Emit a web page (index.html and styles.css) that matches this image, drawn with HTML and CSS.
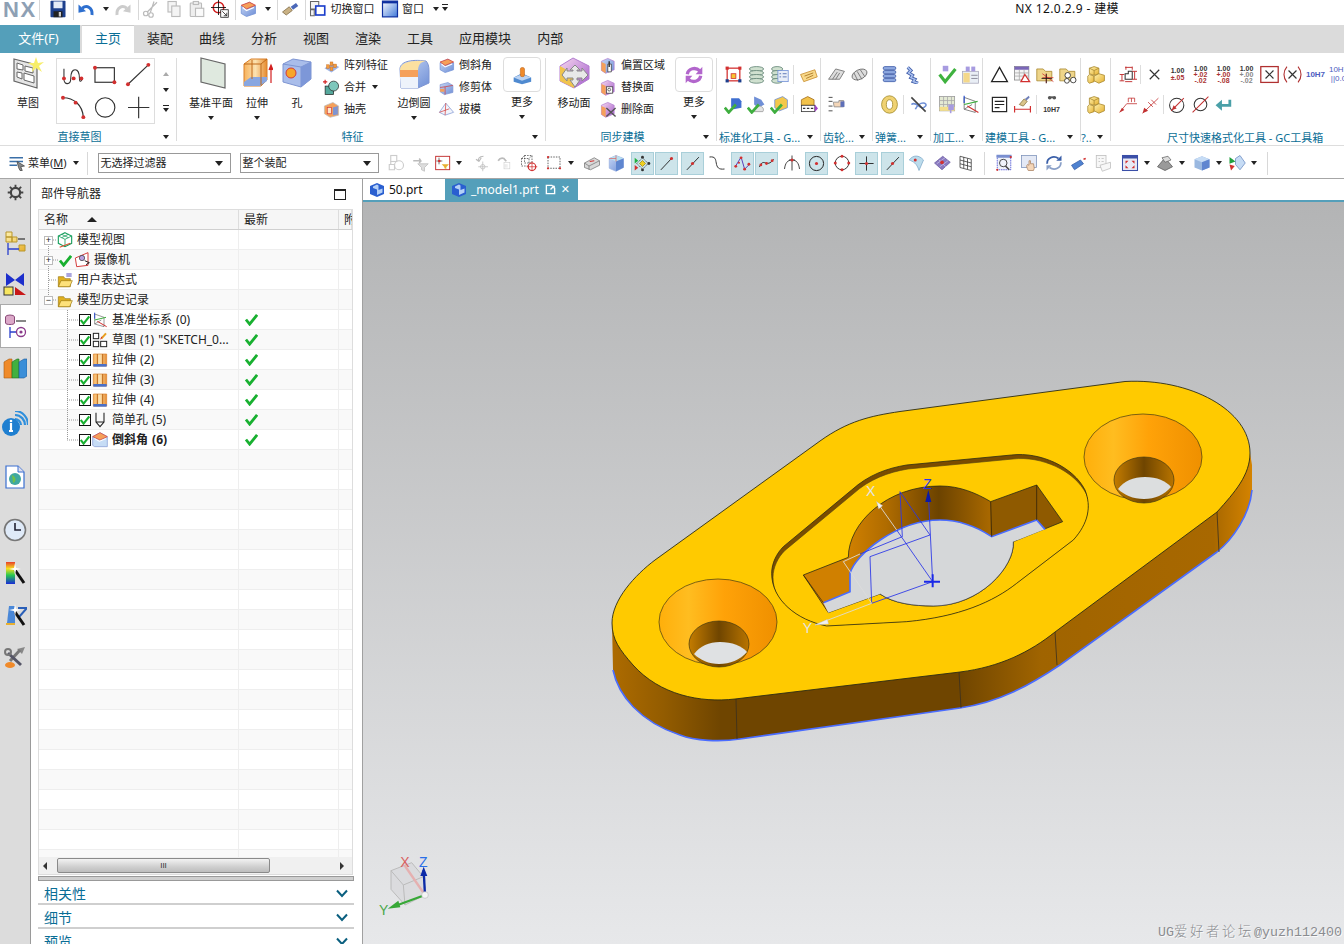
FILE: index.html
```html
<!DOCTYPE html>
<html lang="zh-CN">
<head>
<meta charset="utf-8">
<title>NX 12.0.2.9 - 建模</title>
<link rel="stylesheet" href="styles.css">
</head>
<body>
<svg class="sprite" xmlns="http://www.w3.org/2000/svg">
<defs>
<linearGradient id="go" x1="0" x2="1" y1="0" y2="0"><stop offset="0" stop-color="#f7b25c"/><stop offset=".5" stop-color="#fbe2b0"/><stop offset="1" stop-color="#e68a2e"/></linearGradient>
<linearGradient id="gb" x1="0" x2="1" y1="0" y2="1"><stop offset="0" stop-color="#c6d6f5"/><stop offset="1" stop-color="#6f8fd6"/></linearGradient>
<linearGradient id="gy" x1="0" x2="1" y1="0" y2="1"><stop offset="0" stop-color="#fff2b0"/><stop offset="1" stop-color="#e6b02e"/></linearGradient>
<linearGradient id="gw" x1="0" x2="1" y1="0" y2="1"><stop offset="0" stop-color="#fff"/><stop offset="1" stop-color="#3f78d8"/></linearGradient>
<linearGradient id="gr" x1="0" x2="0" y1="0" y2="1"><stop offset="0" stop-color="#e8402a"/><stop offset=".3" stop-color="#f6e020"/><stop offset=".6" stop-color="#28c850"/><stop offset="1" stop-color="#1a2ad8"/></linearGradient>
<linearGradient id="gp" x1="0" x2="1" y1="0" y2="1"><stop offset="0" stop-color="#f6d9ee"/><stop offset="1" stop-color="#a35ccc"/></linearGradient>
</defs>
<symbol id="save" viewBox="0 0 24 24"><rect x="2" y="1" width="20" height="22" rx="1" fill="#1d3f8c"/><rect x="6" y="2" width="12" height="9" fill="#e4ebf7"/><rect x="6" y="15" width="12" height="8" fill="#222"/><rect x="13" y="16" width="3" height="6" fill="#ccc"/></symbol>
<symbol id="undo" viewBox="0 0 24 24"><path d="M20 20C21 10 13 6 7 11" fill="none" stroke="#2d6fcf" stroke-width="4"/><path d="M2 6L12 15L2 17Z" fill="#2d6fcf"/></symbol>
<symbol id="redo" viewBox="0 0 24 24"><path d="M4 20C3 10 11 6 17 11" fill="none" stroke="#ccc" stroke-width="4"/><path d="M22 6L12 15L22 17Z" fill="#ccc"/></symbol>
<symbol id="cut" viewBox="0 0 24 24"><g fill="none" stroke="#bbb" stroke-width="1.6"><circle cx="5" cy="18" r="3"/><circle cx="12" cy="20" r="3"/><path d="M7 16L20 3M11 17L16 2"/></g></symbol>
<symbol id="copy" viewBox="0 0 24 24"><g fill="#f4f4f4" stroke="#bbb" stroke-width="1.5"><rect x="4" y="2" width="11" height="14"/><rect x="9" y="8" width="11" height="14"/></g></symbol>
<symbol id="paste" viewBox="0 0 24 24"><g fill="#eee" stroke="#bbb" stroke-width="1.5"><rect x="3" y="4" width="15" height="18" rx="1"/><rect x="7" y="2" width="7" height="4"/><rect x="10" y="11" width="11" height="11" fill="#fafafa"/></g></symbol>
<symbol id="xhair" viewBox="0 0 24 24"><circle cx="10" cy="10" r="7" fill="#fff" stroke="#d42020" stroke-width="2"/><path d="M10 0V20M0 10H20" stroke="#111" stroke-width="1.2"/><rect x="13" y="13" width="10" height="10" fill="#fff" stroke="#111"/><path d="M15 15L21 21M21 17V21H17" stroke="#111" fill="none"/></symbol>
<symbol id="chamf" viewBox="0 0 24 24"><path d="M3 8L14 3L22 8V18L10 22L3 18Z" fill="url(#gb)" stroke="#6f8fd6"/><path d="M3 7L14 3L22 7L10 12Z" fill="#f5a05a" stroke="#d23a3a"/><path d="M5 10L10 14L20 10" fill="none" stroke="#fff" stroke-width="1.5"/></symbol>
<symbol id="brush" viewBox="0 0 24 24"><path d="M2 16L11 9L15 14L7 20Z" fill="#c9b184" stroke="#7a6540"/><path d="M13 9L20 4L23 8L16 13Z" fill="#4b68b8"/></symbol>
<symbol id="switch" viewBox="0 0 24 24"><path d="M2 2H13V12H2ZM2 13H7V21H2Z" fill="#f3f3f3" stroke="#666" stroke-width="1.4"/><rect x="9" y="8" width="12" height="12" fill="#fff" stroke="#1d3fcc" stroke-width="2.2"/></symbol>
<symbol id="window" viewBox="0 0 24 24"><rect x="2" y="1.5" width="20" height="21" fill="url(#gw)" stroke="#0d2fa0" stroke-width="1.6"/><rect x="2" y="1.5" width="20" height="3" fill="#0d2fa0"/></symbol>
<symbol id="menu" viewBox="0 0 24 24"><path d="M2 5H20M2 10H20M2 15H12" stroke="#3a6fa8" stroke-width="2"/><path d="M12 10L22 16L17 17L19 22L16 22L14 18Z" fill="#888" stroke="#444"/></symbol>
<symbol id="sketch" viewBox="0 0 32 32"><path d="M2 2L25 8V31L2 24Z" fill="#e5e5e5" stroke="#666" stroke-width="1.2"/><g fill="#fff" stroke="#666"><path d="M5 6L11 8V13L5 12Z"/><path d="M13 9L21 11V16L13 14Z"/><path d="M5 15L10 16V22L5 20Z"/><path d="M12 16L22 19V26L12 23Z"/></g><path d="M24 0L26 6L32 5L27 9L30 15L24 11L20 15L21 9L16 6L22 6Z" fill="#f7ee6a"/></symbol>
<symbol id="g1" viewBox="0 0 33 33"><path d="M7 10V21C7 27 14 27 14 20C14 8 23 8 23 20C23 24 25 24 26 20" fill="none" stroke="#333" stroke-width="1.1"/><g fill="#d23030"><circle cx="7" cy="20" r="2"/><circle cx="17" cy="20" r="2"/><circle cx="25" cy="20" r="2"/></g></symbol>
<symbol id="g2" viewBox="0 0 33 33"><rect x="6" y="9" width="20" height="15" fill="none" stroke="#333" stroke-width="1.2"/><circle cx="6" cy="9" r="2" fill="#d23030"/><circle cx="26" cy="24" r="2" fill="#d23030"/></symbol>
<symbol id="g3" viewBox="0 0 33 33"><path d="M6 26L27 6" stroke="#333" stroke-width="1.2"/><circle cx="6" cy="26" r="2" fill="#d23030"/><circle cx="27" cy="6" r="2" fill="#d23030"/></symbol>
<symbol id="g4" viewBox="0 0 33 33"><path d="M6 7C17 7 26 14 27 27" fill="none" stroke="#333" stroke-width="1.2"/><g fill="#d23030"><circle cx="6" cy="7" r="2"/><circle cx="19" cy="12" r="2"/><circle cx="27" cy="27" r="2"/></g></symbol>
<symbol id="g5" viewBox="0 0 33 33"><circle cx="16.500" cy="17" r="10" fill="none" stroke="#333" stroke-width="1.2"/></symbol>
<symbol id="g6" viewBox="0 0 33 33"><path d="M17 6V28M6 17H28" stroke="#333" stroke-width="1.2"/></symbol>
<symbol id="plane" viewBox="0 0 32 32"><path d="M6 1L30 7V31L6 25Z" fill="#dfe9df" stroke="#666" stroke-width="1.2"/></symbol>
<symbol id="extrude" viewBox="0 0 32 32"><path d="M3 7L10 2H26V23L20 29H3Z" fill="url(#go)" stroke="#d9802b"/><path d="M3 25L10 20H26V24L19 29H3Z" fill="#88a6e0"/><path d="M11 3V22M20 7V28M3 7H20L26 2" stroke="#c06a1a" fill="none"/><path d="M30 10V26M28 13L30 8L32 13" stroke="#d22020" fill="#d22020" stroke-width="1.2"/></symbol>
<symbol id="hole" viewBox="0 0 32 32"><path d="M2 7L12 2L30 5V22L20 30L2 25Z" fill="#a9bdea" stroke="#7e95d2"/><path d="M2 7L20 10V30M20 10L30 5" fill="none" stroke="#7e95d2"/><path d="M20 10V30L30 22V5Z" fill="#7d97d8"/><circle cx="10" cy="16" r="5" fill="#f7a629" stroke="#d23a3a"/></symbol>
<symbol id="pattern" viewBox="0 0 24 24"><path d="M2 16L12 22L23 14L13 9Z" fill="#9eb5e6"/><g fill="#f59b3a" stroke="#c0661a" stroke-width=".6"><rect x="5" y="11" width="4" height="5"/><rect x="10" y="14" width="4" height="5"/><rect x="10" y="7" width="4" height="5"/><rect x="15" y="10" width="4" height="5"/></g></symbol>
<symbol id="unite" viewBox="0 0 24 24"><rect x="3" y="10" width="12" height="12" fill="#55a89c" stroke="#222"/><circle cx="15" cy="10" r="7" fill="#7ec7bc" stroke="#222"/><path d="M0 4H6M3 1V7" stroke="#d22020" stroke-width="1.6"/></symbol>
<symbol id="shell" viewBox="0 0 24 24"><path d="M2 7L14 2L22 7V20L10 23L2 18Z" fill="#f5a05a" stroke="#bbb"/><path d="M14 9L21 7V19L14 20Z" fill="#7e95d2"/><rect x="6" y="9" width="6" height="9" fill="#fbe7c9" stroke="#d23a3a"/></symbol>
<symbol id="blend" viewBox="0 0 32 32"><path d="M2 12C2 5 12 2 28 4C30 6 31 9 31 14V26L20 31H3Z" fill="url(#gb)" stroke="#7e95d2"/><path d="M2 13C2 6 12 3 28 4C22 5 20 8 20 15Z" fill="#fbe0a0"/><path d="M2 13H20V20H2Z" fill="#f5a05a"/><path d="M2 20H20V31H3Z" fill="#eef3fb"/></symbol>
<symbol id="trim" viewBox="0 0 24 24"><path d="M3 8L14 5L21 9V19L9 22L3 18Z" fill="url(#gb)" stroke="#7e95d2"/><path d="M3 12L10 11V22M10 11L21 9" stroke="#d23a3a" fill="none"/><path d="M3 14H9V18H3Z" fill="#f5a05a"/></symbol>
<symbol id="draft" viewBox="0 0 24 24"><path d="M11 3L22 16L10 20L2 16Z" fill="#f1f4fb" stroke="#7e95d2"/><path d="M11 3L10 20M2 16L16 11" stroke="#d23a3a" fill="none"/></symbol>
<symbol id="stamp" viewBox="0 0 24 24"><path d="M2 15L12 10L23 15V20L12 23L2 20Z" fill="#4f8ad0"/><path d="M2 15L12 19L23 15L12 11Z" fill="#bcd3f2"/><rect x="10" y="3" width="5" height="11" rx="2" fill="#f08a2a" stroke="#b75c10" stroke-width=".6"/></symbol>
<symbol id="move" viewBox="0 0 32 32"><path d="M15 1L31 9V22L16 31L2 24V9Z" fill="url(#gp)" stroke="#b27cd0"/><path d="M2 9L16 17V31L2 24Z" fill="#f0c44c"/><path d="M17 8L22 13H19V14H24V11L30 18L24 24V21H19V23H22L17 30L12 23H15V21H9V24L4 18L9 11V14H15V13H12Z" fill="#e8e8e8" stroke="#888"/></symbol>
<symbol id="offset" viewBox="0 0 24 24"><path d="M2 6L11 2L20 6V18L8 23L2 19Z" fill="url(#gb)" stroke="#b27cd0"/><path d="M2 7L8 10V23L2 19Z" fill="#f5a05a"/><path d="M11 10H16V21H11Z" fill="#fff" stroke="#333"/><path d="M13 6V14" stroke="#333" stroke-width="2"/></symbol>
<symbol id="replace" viewBox="0 0 24 24"><path d="M2 6L11 2L20 6V18L8 23L2 19Z" fill="url(#gp)" stroke="#b27cd0"/><path d="M2 7L8 10V23L2 19Z" fill="#f5a05a"/><rect x="9" y="11" width="9" height="9" fill="#fff" stroke="#333"/><circle cx="13" cy="15" r="2" fill="none" stroke="#333"/></symbol>
<symbol id="delete" viewBox="0 0 24 24"><path d="M2 6L11 2L20 6V18L8 23L2 19Z" fill="url(#gp)" stroke="#b27cd0"/><path d="M2 7L8 10V23L2 19Z" fill="#f5a05a"/><path d="M9 10L22 22M22 10L9 22" stroke="#555" stroke-width="2"/></symbol>
<symbol id="sync" viewBox="0 0 24 24"><path d="M4 11C5 4 14 2 19 7" fill="none" stroke="#b266cc" stroke-width="4"/><path d="M22 2V11H14Z" fill="#b266cc"/><path d="M20 13C19 20 10 22 5 17" fill="none" stroke="#b266cc" stroke-width="4"/><path d="M2 22V13H10Z" fill="#b266cc"/></symbol>
<symbol id="frame" viewBox="0 0 24 24"><rect x="4" y="4" width="16" height="16" fill="#fff" stroke="#d23030" stroke-width="1.6"/><rect x="9" y="11" width="6" height="6" fill="#f7c530" stroke="#d23030"/><g fill="#1d3f8c"><rect x="2" y="2" width="4" height="4" fill="#d23030"/><rect x="18" y="2" width="4" height="4" fill="#d23030"/><rect x="2" y="18" width="4" height="4"/><rect x="18" y="18" width="4" height="4"/></g></symbol>
<symbol id="stack" viewBox="0 0 24 24"><g fill="#cfe0cf" stroke="#5d8071"><ellipse cx="12" cy="5" rx="9" ry="3"/><ellipse cx="12" cy="10" rx="9" ry="3"/><ellipse cx="12" cy="15" rx="9" ry="3"/><ellipse cx="12" cy="20" rx="9" ry="3"/></g></symbol>
<symbol id="stackl" viewBox="0 0 24 24"><g fill="#cfe0cf" stroke="#5d8071"><ellipse cx="9" cy="5" rx="7" ry="3"/><ellipse cx="9" cy="10" rx="7" ry="3"/><ellipse cx="9" cy="15" rx="7" ry="3"/><ellipse cx="9" cy="20" rx="7" ry="3"/></g><rect x="10" y="7" width="13" height="14" fill="#e8eef8" stroke="#6f8fd6"/><path d="M12 11H14M16 11H21M12 15H14M16 15H21" stroke="#3f5fa8"/></symbol>
<symbol id="tag" viewBox="0 0 24 24"><path d="M2 12L20 6L23 15L6 21Z" fill="#f9d98a" stroke="#c68a2a"/><path d="M7 14L18 10M9 17L18 13" stroke="#a06a1a"/></symbol>
<symbol id="okblue" viewBox="0 0 24 24"><path d="M9 4H19L22 8V16L12 18L9 15Z" fill="#3f6fd0"/><path d="M1 16L6 22L15 12" fill="none" stroke="#3fae3f" stroke-width="3.4"/></symbol>
<symbol id="okmix" viewBox="0 0 24 24"><path d="M9 2L18 6L22 12L14 16L9 12Z" fill="#6f8fd6"/><path d="M15 14C20 14 22 18 20 21L8 21Z" fill="#e4e4e4" stroke="#999"/><path d="M1 16L6 22L15 12" fill="none" stroke="#3fae3f" stroke-width="3.4"/></symbol>
<symbol id="okyel" viewBox="0 0 24 24"><path d="M6 6L16 2L22 6V16L12 20L6 16Z" fill="#f4c84a" stroke="#6f8fd6"/><path d="M1 16L6 22L15 12" fill="none" stroke="#3fae3f" stroke-width="3.4"/></symbol>
<symbol id="asmp" viewBox="0 0 24 24"><path d="M3 6L11 2L19 6V13H3Z" fill="#f2c24a" stroke="#a06a1a"/><rect x="3" y="13" width="17" height="8" fill="#fff" stroke="#333"/><path d="M5 17H8M10 17H13M15 17H18" stroke="#333" stroke-width="1.6"/><path d="M20 12L24 17L20 21Z" fill="#a040c8"/></symbol>
<symbol id="gear1" viewBox="0 0 24 24"><path d="M2 18L11 5L22 8L16 18Z" fill="#ddd" stroke="#666"/><path d="M7 18L13 9M11 18L16 10" stroke="#666"/></symbol>
<symbol id="gear2" viewBox="0 0 24 24"><ellipse cx="12" cy="12" rx="10" ry="6" transform="rotate(-25 12 12)" fill="#ddd" stroke="#666"/><path d="M5 10L10 20M9 8L15 18M13 6L19 15" stroke="#666"/></symbol>
<symbol id="point" viewBox="0 0 24 24"><path d="M2 3H7M2 8H7M2 14H7M2 20H7" stroke="#222"/><path d="M8 9H15V7H21V15H9Z" fill="#f4d6b8" stroke="#888"/><rect x="17" y="8" width="5" height="7" fill="#5d6fb8"/></symbol>
<symbol id="coil" viewBox="0 0 24 24"><g fill="#8da8e0" stroke="#3e5ba8"><rect x="4" y="2" width="16" height="4" rx="2"/><rect x="4" y="7" width="16" height="4" rx="2"/><rect x="4" y="12" width="16" height="4" rx="2"/><rect x="4" y="17" width="16" height="4" rx="2"/></g></symbol>
<symbol id="spring" viewBox="0 0 24 24"><path d="M6 3L10 7L7 10L12 13L10 16L15 18L13 21L19 23" fill="none" stroke="#3e5ba8" stroke-width="4"/><path d="M6 3L10 7L7 10L12 13L10 16L15 18L13 21L19 23" fill="none" stroke="#a9c0ee" stroke-width="2"/></symbol>
<symbol id="ring" viewBox="0 0 24 24"><ellipse cx="12" cy="12" rx="10" ry="11" fill="#f0d272" stroke="#a0892a"/><ellipse cx="12" cy="12" rx="4" ry="6" fill="#fff" stroke="#a0892a"/></symbol>
<symbol id="springx" viewBox="0 0 24 24"><path d="M3 12C10 6 14 22 21 14C24 10 14 6 8 18" fill="none" stroke="#6f8fd6" stroke-width="2"/><path d="M3 3L21 21" stroke="#444" stroke-width="2"/></symbol>
<symbol id="vcheck" viewBox="0 0 24 24"><rect x="6" y="1" width="7" height="7" fill="#a79be0"/><path d="M2 12L9 21L22 5" fill="none" stroke="#3fb23f" stroke-width="4"/></symbol>
<symbol id="clist" viewBox="0 0 24 24"><rect x="2" y="8" width="20" height="15" fill="#e9eef5" stroke="#aab"/><g fill="#a79be0"><rect x="6" y="2" width="5" height="6"/><rect x="13" y="2" width="5" height="6"/></g><rect x="3" y="10" width="8" height="12" fill="#f4d88a"/><path d="M13 13H21M13 17H21" stroke="#778"/></symbol>
<symbol id="gridb" viewBox="0 0 24 24"><rect x="2" y="2" width="19" height="18" fill="#e4ead4" stroke="#999"/><path d="M7 2V20M12 2V20M17 2V20M2 7H21M2 12H21M2 16H21" stroke="#aaa"/><rect x="2" y="15" width="19" height="5" fill="#f4df8a"/><rect x="13" y="12" width="7" height="7" fill="#a79be0"/><path d="M16 19V23" stroke="#a79be0" stroke-width="2"/></symbol>
<symbol id="csys" viewBox="0 0 24 24"><path d="M4 3V18L18 22V8L4 3M4 18L14 12" fill="none" stroke="#666"/><path d="M4 1V10" stroke="#2a4fcc" stroke-width="1.5"/><path d="M4 12L21 8" stroke="#3fae3f" stroke-width="1.5"/><path d="M8 14L22 22" stroke="#d23030" stroke-width="1.5"/></symbol>
<symbol id="tri" viewBox="0 0 24 24"><path d="M12 3L22 21H2Z" fill="none" stroke="#222" stroke-width="1.6"/></symbol>
<symbol id="tbl" viewBox="0 0 24 24"><rect x="2" y="2" width="18" height="17" fill="#f4f4f4" stroke="#888"/><rect x="2" y="2" width="18" height="4" fill="#7a66b8"/><path d="M2 10H20M2 14H20M8 6V19M14 6V19" stroke="#aaa"/><path d="M15 12L21 21H10Z" fill="#fff" stroke="#d23030" stroke-width="1.6"/></symbol>
<symbol id="foldp" viewBox="0 0 24 24"><path d="M1 5H9L12 8H20V20H1Z" fill="#eed58a" stroke="#a8862c"/><path d="M13 11V23M8 16H22M8 11L22 21" stroke="#d23030"/><path d="M13 11V23M7 17H20" stroke="#111"/></symbol>
<symbol id="foldc" viewBox="0 0 24 24"><path d="M1 5H9L12 8H20V20H1Z" fill="#eed58a" stroke="#a8862c"/><g fill="#fff" stroke="#222"><circle cx="11" cy="13" r="3.500"/><circle cx="18" cy="19" r="3.500"/><circle cx="10" cy="20" r="3"/></g></symbol>
<symbol id="doc" viewBox="0 0 24 24"><rect x="3" y="3" width="18" height="18" fill="#fff" stroke="#222" stroke-width="1.5"/><path d="M6 8H18M6 12H18M6 16H12" stroke="#222" stroke-width="1.400"/></symbol>
<symbol id="brushd" viewBox="0 0 24 24"><path d="M8 12L14 5L18 8L13 14Z" fill="#d9c48a" stroke="#8a7540"/><path d="M15 5L20 1L21 3L17 7Z" fill="#6f7fb8"/><path d="M2 14V22M22 14V22M2 18H22" stroke="#d23030" stroke-width="1.500"/></symbol>
<symbol id="boxes" viewBox="0 0 24 24"><g stroke="#a8862c" fill="url(#gy)"><path d="M9 2L15 4V11L9 13L3 11V4Z"/><path d="M3 12L9 14V21L3 23L1 21V14Z"/><path d="M15 11L22 13V20L15 23L9 20V14Z"/></g><path d="M9 7L15 4M9 7L3 4M9 7V13" stroke="#a8862c" fill="none"/></symbol>
<symbol id="dim" viewBox="0 0 24 24"><path d="M9 3H18M3 13H3M10 2V6M18 2V6M5 12V20M2 12H8M2 20H8" stroke="#c23030" stroke-width="1.200"/><path d="M9 18V11H13V8H18V18H9Z" fill="none" stroke="#333" stroke-width="1.300"/><path d="M21 8V18M18 8H24M18 18H24M9 21H18" stroke="#c23030" stroke-width="1.200"/></symbol>
<symbol id="x" viewBox="0 0 24 24"><path d="M6 6L18 18M18 6L6 18" stroke="#333" stroke-width="1.500"/></symbol>
<symbol id="xbox" viewBox="0 0 24 24"><rect x="1" y="2" width="22" height="20" fill="none" stroke="#b03030" stroke-width="1.600"/><path d="M7 7L17 17M17 7L7 17" stroke="#333" stroke-width="1.500"/></symbol>
<symbol id="xpar" viewBox="0 0 24 24"><path d="M5 2C0 8 0 16 5 22M19 2C24 8 24 16 19 22" fill="none" stroke="#b03030" stroke-width="1.400"/><path d="M7 7L17 17M17 7L7 17" stroke="#333" stroke-width="1.500"/></symbol>
<symbol id="rad" viewBox="0 0 24 24"><path d="M2 22L11 11H24" stroke="#c23030" fill="none"/><path d="M2 22L5 16L8 19Z" fill="#c23030"/><path d="M13 4V9M17 4V9M21 4V9M13 4H21" stroke="#c23030" fill="none"/></symbol>
<symbol id="rad2" viewBox="0 0 24 24"><path d="M2 23L22 4" stroke="#c23030"/><path d="M2 23L4 16L9 20Z" fill="#c23030"/><path d="M9 9L15 15M13 6L19 12" stroke="#c23030"/></symbol>
<symbol id="dia" viewBox="0 0 24 24"><circle cx="11" cy="13" r="9" fill="none" stroke="#333" stroke-width="1.300"/><path d="M4 20L20 4" stroke="#c23030" stroke-width="1.300"/><path d="M5 19L7 13L11 17Z" fill="#c23030"/></symbol>
<symbol id="dia2" viewBox="0 0 24 24"><circle cx="12" cy="12" r="8" fill="none" stroke="#333" stroke-width="1.300"/><path d="M2 22L22 2" stroke="#c23030" stroke-width="1.300"/></symbol>
<symbol id="ret" viewBox="0 0 24 24"><path d="M20 6V13H8" fill="none" stroke="#4aa0a8" stroke-width="3.500"/><path d="M2 13L10 6V20Z" fill="#4aa0a8"/></symbol>
<symbol id="bino" viewBox="0 0 24 24"><g fill="#555"><circle cx="7" cy="6" r="4"/><circle cx="17" cy="6" r="4"/><rect x="9" y="3" width="6" height="4"/></g></symbol>
<symbol id="gh1" viewBox="0 0 24 24"><g fill="none" stroke="#ccc" stroke-width="1.500"><rect x="5" y="2" width="8" height="8"/><circle cx="16" cy="15" r="6"/><path d="M3 14H10V21H3ZM5 10V14"/></g></symbol>
<symbol id="gh2" viewBox="0 0 24 24"><path d="M3 9H13L11 6M13 9L11 12" fill="none" stroke="#bbb" stroke-width="2"/><path d="M9 13H23L18 18V23L14 21V18Z" fill="#ddd" stroke="#bbb"/></symbol>
<symbol id="filt" viewBox="0 0 24 24"><rect x="1" y="2" width="21" height="20" fill="#fff" stroke="#c22d2d" stroke-width="1.400"/><path d="M6 4V14M2 9H11" stroke="#333"/><circle cx="6.500" cy="9" r="2" fill="#d23030"/><path d="M10 14H21L17 18V21L14 20V18Z" fill="#e8b030"/></symbol>
<symbol id="gh3" viewBox="0 0 24 24"><path d="M14 3C8 3 6 7 8 10M8 10L4 7M8 10L11 5" fill="none" stroke="#bbb" stroke-width="1.500"/><path d="M13 10V23M7 17H20" stroke="#bbb"/><circle cx="13" cy="17" r="3" fill="none" stroke="#bbb"/></symbol>
<symbol id="gh4" viewBox="0 0 24 24"><path d="M2 8C6 2 12 3 14 7L16 9" fill="none" stroke="#bbb" stroke-width="3"/><rect x="12" y="11" width="10" height="11" fill="none" stroke="#ccc"/><path d="M14 14V20M17 14V20" stroke="#ccc"/></symbol>
<symbol id="selc" viewBox="0 0 24 24"><path d="M6 2H16V12H6ZM2 6H12V16H2ZM2 6L6 2M12 6L16 2" fill="none" stroke="#444" stroke-dasharray="2 1.500"/><circle cx="16" cy="17" r="5" fill="#fff" stroke="#d23030" stroke-width="1.600"/><path d="M16 10V23M9 17H23" stroke="#d23030"/></symbol>
<symbol id="selb" viewBox="0 0 24 24"><rect x="4" y="4" width="16" height="15" fill="none" stroke="#333" stroke-dasharray="2 1.500"/><g fill="#d23030"><circle cx="4" cy="19" r="1.500"/><circle cx="20" cy="19" r="1.500"/><circle cx="4" cy="4" r="1.500"/></g></symbol>
<symbol id="persp" viewBox="0 0 24 24"><path d="M2 12L15 5L22 9V15L10 21L2 18Z" fill="#d8d8d8" stroke="#777"/><path d="M2 12L8 16L22 9M8 16V21" stroke="#777" fill="none"/><path d="M9 10L15 9" stroke="#d23030" stroke-width="1.500"/></symbol>
<symbol id="cube" viewBox="0 0 24 24"><path d="M3 6L12 2L22 6V18L12 23L3 19Z" fill="url(#gb)" stroke="#9ab0e0"/><path d="M3 6L12 10L22 6L12 2Z" fill="#b9e0f0"/><path d="M12 10V23L22 18V6Z" fill="#5f86d0"/><path d="M3 6H12M12 2V10" stroke="#d86a6a"/></symbol>
<symbol id="snap" viewBox="0 0 24 24"><path d="M12 4L20 12L12 20L4 12Z" fill="none" stroke="#222" stroke-dasharray="2 1"/><g fill="#333"><circle cx="12" cy="3" r="2"/><circle cx="12" cy="21" r="2"/><circle cx="21" cy="12" r="2"/></g><rect x="9" y="9" width="6" height="6" fill="#f0d020" stroke="#a08a10" transform="rotate(45 12 12)"/><path d="M1 4L6 8L1 12Z" fill="#20b040"/><path d="M1 14L6 18L1 22Z" fill="#d23030"/></symbol>
<symbol id="ln1" viewBox="0 0 24 24"><path d="M4 21L20 4" stroke="#222" stroke-width="1.300"/><circle cx="19" cy="5" r="2.200" fill="#d23030"/></symbol>
<symbol id="ln2" viewBox="0 0 24 24"><path d="M4 21L21 3" stroke="#222" stroke-width="1.300"/><circle cx="12" cy="12" r="2.200" fill="#d23030"/></symbol>
<symbol id="curve" viewBox="0 0 24 24"><path d="M2 4C10 3 10 7 11 12C12 18 14 21 22 20" fill="none" stroke="#333" stroke-width="1.300"/></symbol>
<symbol id="poly" viewBox="0 0 24 24"><path d="M2 16L10 3L15 20L22 13" fill="none" stroke="#5a3cb8" stroke-width="1.400"/><g fill="#d23030"><circle cx="2.500" cy="16" r="2"/><circle cx="10" cy="4" r="2"/><circle cx="15" cy="20" r="2"/><circle cx="21" cy="13" r="2"/><circle cx="7" cy="11" r="1.500"/></g></symbol>
<symbol id="spl" viewBox="0 0 24 24"><path d="M2 17C8 2 12 20 22 6" fill="none" stroke="#222" stroke-width="1.300"/><g fill="#d23030"><circle cx="4" cy="14" r="2"/><circle cx="12" cy="12" r="2"/><circle cx="20" cy="8" r="2"/></g></symbol>
<symbol id="arcp" viewBox="0 0 24 24"><path d="M2 20C3 12 6 8 12 8C18 8 21 12 22 20M12 2V22M8 8H16" fill="none" stroke="#333" stroke-width="1.200"/><circle cx="12" cy="8" r="2" fill="#d23030"/></symbol>
<symbol id="cen" viewBox="0 0 24 24"><circle cx="12" cy="12" r="10" fill="none" stroke="#222" stroke-width="1.400"/><circle cx="12" cy="12" r="2.200" fill="#d23030"/></symbol>
<symbol id="cirq" viewBox="0 0 24 24"><circle cx="12" cy="12" r="9" fill="none" stroke="#333" stroke-width="1.300"/><g fill="#d23030"><circle cx="12" cy="3" r="2"/><circle cx="12" cy="21" r="2"/><circle cx="3" cy="12" r="2"/><circle cx="21" cy="12" r="2"/></g></symbol>
<symbol id="cross" viewBox="0 0 24 24"><path d="M12 2V22M2 12H22" stroke="#222" stroke-width="1.300"/><circle cx="12" cy="12" r="2.200" fill="#d23030"/></symbol>
<symbol id="surf" viewBox="0 0 24 24"><path d="M3 8C8 1 16 1 22 8L16 22C13 12 8 10 3 8Z" fill="#bcdcec" stroke="#7fa8c8"/><circle cx="11" cy="8" r="2" fill="#d23030"/></symbol>
<symbol id="face" viewBox="0 0 24 24"><path d="M2 12L13 3L23 11L12 21Z" fill="#8a7ac0" stroke="#6a5aa0"/><path d="M5 13L16 5M9 17L20 9M8 8L17 17" stroke="#c8c0e8"/><circle cx="12" cy="11" r="2.500" fill="#d23030"/></symbol>
<symbol id="mesh" viewBox="0 0 24 24"><path d="M4 3L19 7V22L4 18Z" fill="#fff" stroke="#333"/><path d="M9 4V19M14 6V20M4 8L19 12M4 13L19 17" stroke="#333"/></symbol>
<symbol id="fit" viewBox="0 0 24 24"><rect x="3" y="2" width="18" height="19" fill="#f0f3fa" stroke="#3a3fd0" stroke-dasharray="2 1"/><rect x="2" y="1" width="20" height="4" fill="#7a8fd0"/><circle cx="11" cy="12" r="5" fill="none" stroke="#444" stroke-width="1.300"/><path d="M14 16L19 21" stroke="#444" stroke-width="2"/><g fill="#d23030"><circle cx="3" cy="21" r="1.500"/><circle cx="21" cy="4" r="1.500"/></g></symbol>
<symbol id="hand" viewBox="0 0 24 24"><rect x="2" y="2" width="20" height="16" fill="#e4e9f5" stroke="#7a8fb8"/><path d="M11 22C9 18 8 16 10 14L12 15V9H14V13H18L19 19L18 22Z" fill="#f4d6b8" stroke="#a88060"/></symbol>
<symbol id="rot" viewBox="0 0 24 24"><path d="M3 13C2 6 11 1 18 6" fill="none" stroke="#3a5fa8" stroke-width="2.400"/><path d="M21 11C22 18 13 23 6 18" fill="none" stroke="#8aa0c8" stroke-width="2.400"/><path d="M22 2V9H15Z" fill="#3a5fa8"/><path d="M2 22V15H9Z" fill="#8aa0c8"/></symbol>
<symbol id="pen" viewBox="0 0 24 24"><path d="M2 15L14 8L18 13L6 21Z" fill="#4f82d0" stroke="#3a5fa8"/><path d="M18 7L21 6" stroke="#d23030" stroke-width="2"/></symbol>
<symbol id="gh5" viewBox="0 0 24 24"><g fill="#f7f7f7" stroke="#bbb"><rect x="3" y="2" width="13" height="16"/><path d="M8 15L22 11V19L11 23Z"/></g><path d="M6 6H8M10 6H13M6 10H8M10 10H13" stroke="#bbb"/></symbol>
<symbol id="win2" viewBox="0 0 24 24"><rect x="2" y="2" width="20" height="20" fill="#e8eaf5" stroke="#3a4fa8" stroke-width="1.400"/><rect x="2" y="2" width="20" height="4" fill="#3a4fa8"/><g fill="#d23030"><path d="M6 9H10L6 13ZM18 9H14L18 13ZM6 19H10L6 15ZM18 19H14L18 15Z"/></g></symbol>
<symbol id="shade" viewBox="0 0 24 24"><path d="M2 17L12 5L22 17L12 22Z" fill="#9a9a9a" stroke="#555"/><path d="M8 5L16 3L20 8L12 11Z" fill="#ddd" stroke="#666"/></symbol>
<symbol id="cube2" viewBox="0 0 24 24"><path d="M2 7L12 3L22 7V18L12 22L2 18Z" fill="#9ab8e0"/><path d="M2 7L12 11L22 7L12 3Z" fill="#c6dcf5"/><path d="M12 11V22L22 18V7Z" fill="#5f86d0"/></symbol>
<symbol id="rend" viewBox="0 0 24 24"><path d="M10 6L16 2L23 12L16 21L10 14Z" fill="#c6dcf5" stroke="#6a8ac0"/><path d="M2 4L10 10L2 13Z" fill="#20a040"/><path d="M2 14L9 16L4 22Z" fill="#d23030"/></symbol>
<symbol id="cog" viewBox="0 0 24 24"><circle cx="12" cy="12" r="6.500" fill="none" stroke="#444" stroke-width="3"/><path d="M12 1V5M12 19V23M1 12H5M19 12H23M4 4L7 7M17 17L20 20M4 20L7 17M17 7L20 4" stroke="#444" stroke-width="2.600"/></symbol>
<symbol id="asm" viewBox="0 0 24 24"><g fill="url(#gy)" stroke="#b8962c"><path d="M3 1H9V6H3ZM3 6H9V11H3ZM9 6H14V11H9ZM16 14H22V20H16Z"/></g><path d="M15 8H22" stroke="#111"/><path d="M5 12V24M5 18H16" stroke="#2a3fcc" stroke-width="1.300"/></symbol>
<symbol id="cons" viewBox="0 0 24 24"><path d="M3 1L12 8L3 14ZM21 1L12 8L21 14Z" fill="#1d2fcc"/><rect x="1" y="15" width="9" height="8" fill="#f7e660" stroke="#333"/><path d="M12 15L23 23H12Z" fill="#c81818"/></symbol>
<symbol id="parts" viewBox="0 0 24 24"><ellipse cx="6" cy="3" rx="4.500" ry="2" fill="#dba8c8" stroke="#8a4a78"/><path d="M1.500 3V9C1.500 11 10.500 11 10.500 9V3" fill="#dba8c8" stroke="#8a4a78"/><path d="M12 7H22" stroke="#111"/><path d="M6 13V24M6 18H12" stroke="#2a3fcc" stroke-width="1.300"/><circle cx="17" cy="18" r="4.500" fill="#fff" stroke="#8a3a8a" stroke-width="1.300"/><circle cx="17" cy="18" r="1.600" fill="#8a3a8a"/></symbol>
<symbol id="books" viewBox="0 0 24 24"><path d="M1 5L6 2H9V21H1Z" fill="#ef8a2a" stroke="#a85c10" stroke-width=".6"/><path d="M9 5L14 2H16V21H9Z" fill="#42b03f" stroke="#207020" stroke-width=".6"/><path d="M16 5L21 2H24V19L21 21H16Z" fill="#3a8ed8" stroke="#205c98" stroke-width=".6"/></symbol>
<symbol id="info" viewBox="0 0 26 26"><path d="M13 4C19 4 23 9 23 14M13 0C21 0 26 7 26 14M13 8C16 8 19 11 19 14" fill="none" stroke="#2f8fdc" stroke-width="2.200"/><circle cx="9" cy="16" r="9" fill="#1f7fd0"/><path d="M9 12V20M7 20H11" stroke="#fff" stroke-width="2.200"/><circle cx="9" cy="10" r="1.300" fill="#fff"/></symbol>
<symbol id="page" viewBox="0 0 24 24"><path d="M3 1H15L21 7V23H3Z" fill="#fff" stroke="#3a6fd0" stroke-width="1.200"/><path d="M15 1V7H21" fill="#dde" stroke="#3a6fd0"/><circle cx="12" cy="14" r="6" fill="#3fa8a0"/><path d="M9 10C13 12 14 16 10 18" fill="#6fc04a"/></symbol>
<symbol id="clock" viewBox="0 0 24 24"><circle cx="12" cy="12" r="10.500" fill="#dfeaf8" stroke="#777" stroke-width="1.600"/><path d="M12 5V12H18" fill="none" stroke="#223" stroke-width="1.600"/></symbol>
<symbol id="rain" viewBox="0 0 24 24"><rect x="3" y="1" width="9" height="22" fill="url(#gr)"/><path d="M12 9L21 22" stroke="#111" stroke-width="3"/><path d="M12 2L13 7L18 8L13 9L12 14L11 9L6 8L11 7Z" fill="#fff"/></symbol>
<symbol id="wand" viewBox="0 0 24 24"><path d="M6 3H12V20H4Z" fill="#4a88d8"/><path d="M3 21H12" stroke="#e8b030" stroke-width="2"/><path d="M15 5H24L16 14" fill="none" stroke="#2a5fb8" stroke-width="2"/><path d="M12 9L21 22" stroke="#111" stroke-width="3"/><path d="M12 1L13 6L18 7L13 8L12 13L11 8L6 7L11 6Z" fill="#fff"/></symbol>
<symbol id="tools" viewBox="0 0 24 24"><path d="M14 4L22 2L19 9Z" fill="#888"/><path d="M17 5L7 16" stroke="#777" stroke-width="3"/><path d="M5 8L18 20" stroke="#556" stroke-width="3"/><ellipse cx="7" cy="20" rx="5" ry="3" fill="#f08a2a"/><circle cx="5" cy="7" r="3" fill="none" stroke="#777" stroke-width="2"/></symbol>
<symbol id="nmodel" viewBox="0 0 24 24"><path d="M12 1L22 6V17L12 22L2 17V6Z" fill="none" stroke="#1aa060" stroke-width="1.700"/><path d="M2 6L12 11L22 6M12 11V22M7 3.500L17 8.500M17 3.500L7 8.500" fill="none" stroke="#1aa060" stroke-width="1.200"/><path d="M4 23L20 17" stroke="#e05030" stroke-width="1.700"/></symbol>
<symbol id="ncam" viewBox="0 0 24 24"><path d="M2 9L21 1V20L4 22Z" fill="#fff" stroke="#d23030" stroke-width="1.400"/><circle cx="12" cy="9" r="4" fill="#b8a0e0" stroke="#333"/><path d="M16 13L23 16L18 19" stroke="#222" fill="none" stroke-width="1.500"/></symbol>
<symbol id="fold" viewBox="0 0 24 24"><path d="M2 7H10L12 10H20V22H2Z" fill="#e0b020" stroke="#9a7810"/><path d="M2 22L6 13H23L19 22Z" fill="#fde17a" stroke="#9a7810"/></symbol>
<symbol id="foldn" viewBox="0 0 24 24"><path d="M2 7H10L12 10H20V22H2Z" fill="#e0b020" stroke="#9a7810"/><path d="M2 22L6 13H23L19 22Z" fill="#fde17a" stroke="#9a7810"/><path d="M14 3H22M14 6H22" stroke="#3a2fb0" stroke-width="1.300"/></symbol>
<symbol id="nsk" viewBox="0 0 24 24"><g fill="#fff" stroke="#222" stroke-width="1.500"><rect x="2" y="2" width="8" height="8"/><rect x="2" y="14" width="8" height="8"/><rect x="13" y="14" width="9" height="8"/></g><path d="M14 10L21 2" stroke="#e8a020" stroke-width="3"/><path d="M13 11L15 7" stroke="#d23030" stroke-width="1.500"/></symbol>
<symbol id="next" viewBox="0 0 24 24"><path d="M2 3H22V21H2Z" fill="url(#go)" stroke="#d9802b"/><path d="M8 3V21M16 3V21" stroke="#c06a1a" stroke-width="1.600"/><path d="M2 18H22V22H2Z" fill="#4a70c8"/></symbol>
<symbol id="nhole" viewBox="0 0 24 24"><path d="M6 1V15L12 22L18 15V1M6 15H18" fill="none" stroke="#222" stroke-width="1.600"/></symbol>
<symbol id="ncham" viewBox="0 0 24 24"><path d="M1 7L12 1L23 7V22H4L1 20Z" fill="#c6dcf5" stroke="#7e95d2"/><path d="M1 7L12 1L23 7L12 12Z" fill="#f5a05a" stroke="#d23a3a"/><path d="M4 10L11 14L21 10" fill="none" stroke="#fff" stroke-width="1.500"/></symbol>
<symbol id="ok" viewBox="0 0 14 14"><path d="M1 7L5 12L13 2" fill="none" stroke="#18b030" stroke-width="3"/></symbol>
<symbol id="cube3" viewBox="0 0 16 16"><path d="M1 4L8 1L15 4V12L8 15L1 12Z" fill="#2a5fd0"/><path d="M4 4.500L8 2.500L9.500 3.500V8L13.500 6.500V10.500L8 13V7.500L4 6Z" fill="#b4d0f7"/></symbol>
</svg>

<div class="app">
  <header class="titlebar">
    <span class="logo">NX</span><span class="vsep"></span>
    <svg class="qi qa"><use href="#save"/></svg><span class="vsep"></span>
    <svg class="qi"><use href="#undo"/></svg><span class="caret"></span>
    <svg class="qi"><use href="#redo"/></svg><span class="vsep"></span>
    <svg class="qi"><use href="#cut"/></svg>
    <svg class="qi"><use href="#copy"/></svg>
    <svg class="qi"><use href="#paste"/></svg>
    <svg class="qi"><use href="#xhair"/></svg><span class="vsep"></span>
    <svg class="qi"><use href="#chamf"/></svg><span class="caret"></span><span class="vsep"></span>
    <svg class="qi"><use href="#brush"/></svg><span class="vsep"></span>
    <svg class="qi"><use href="#switch"/></svg><span class="qt">切换窗口</span>
    <svg class="qi"><use href="#window"/></svg><span class="qt">窗口</span><span class="caret"></span><span class="caret bar"></span>
    <span class="title">NX 12.0.2.9 - 建模</span>
  </header>

  <nav class="tabs">
    <span class="file">文件(F)</span>
    <span class="tab active">主页</span><span class="tab">装配</span><span class="tab">曲线</span><span class="tab">分析</span><span class="tab">视图</span><span class="tab">渲染</span><span class="tab">工具</span><span class="tab">应用模块</span><span class="tab">内部</span>
  </nav>

  <section class="ribbon">
    <div class="grp w177">
      <div class="gbody p0">
        <div class="big w56"><svg class="bi"><use href="#sketch"/></svg><span>草图</span></div>
        <div class="gallery">
          <svg><use href="#g1"/></svg><svg><use href="#g2"/></svg><svg><use href="#g3"/></svg>
          <svg><use href="#g4"/></svg><svg><use href="#g5"/></svg><svg><use href="#g6"/></svg>
        </div>
        <div class="gscroll"><i class="up"></i><i class="dn"></i><i class="dnb"></i></div>
      </div>
      <div class="gfoot"><span class="gl">直接草图</span><i class="dn"></i></div>
    </div>
    <div class="grp w369">
      <div class="gbody p11">
        <div class="big w46"><svg class="bi"><use href="#plane"/></svg><span>基准平面</span><i class="dn"></i></div>
        <div class="big w46"><svg class="bi"><use href="#extrude"/></svg><span>拉伸</span><i class="dn"></i></div>
        <div class="big w34"><svg class="bi"><use href="#hole"/></svg><span>孔</span></div>
        <div class="scol w68 ml9">
          <div class="sr"><svg><use href="#pattern"/></svg><span>阵列特征</span></div>
          <div class="sr"><svg><use href="#unite"/></svg><span>合并</span><i class="dn ml6"></i></div>
          <div class="sr"><svg><use href="#shell"/></svg><span>抽壳</span></div>
        </div>
        <div class="big w46"><svg class="bi"><use href="#blend"/></svg><span>边倒圆</span><i class="dn"></i></div>
        <div class="scol w62 ml1">
          <div class="sr"><svg><use href="#chamf"/></svg><span>倒斜角</span></div>
          <div class="sr"><svg><use href="#trim"/></svg><span>修剪体</span></div>
          <div class="sr"><svg><use href="#draft"/></svg><span>拔模</span></div>
        </div>
        <div class="more ml3"><div class="mbox"><svg><use href="#stamp"/></svg></div><span>更多</span><i class="dn"></i></div>
      </div>
      <div class="gfoot"><span class="gl">特征</span><i class="dn"></i></div>
    </div>
    <div class="grp w171">
      <div class="gbody p5">
        <div class="big w46"><svg class="bi"><use href="#move"/></svg><span>移动面</span></div>
        <div class="scol w70 ml3">
          <div class="sr"><svg><use href="#offset"/></svg><span>偏置区域</span></div>
          <div class="sr"><svg><use href="#replace"/></svg><span>替换面</span></div>
          <div class="sr"><svg><use href="#delete"/></svg><span>删除面</span></div>
        </div>
        <div class="more ml5"><div class="mbox"><svg><use href="#sync"/></svg></div><span>更多</span><i class="dn"></i></div>
      </div>
      <div class="gfoot"><span class="gl">同步建模</span><i class="dn"></i></div>
    </div>
    <div class="grp w104">
      <div class="gcol p5">
        <div class="rw"><svg><use href="#frame"/></svg><svg><use href="#stack"/></svg><svg><use href="#stackl"/></svg><b></b><svg><use href="#tag"/></svg></div>
        <div class="rw"><svg><use href="#okblue"/></svg><svg><use href="#okmix"/></svg><svg><use href="#okyel"/></svg><b></b><svg><use href="#asmp"/></svg></div>
      </div>
      <div class="gfoot"><span class="gl tl">标准化工具 - G...</span><i class="dn"></i></div>
    </div>
    <div class="grp w52">
      <div class="gcol p4">
        <div class="rw"><svg><use href="#gear1"/></svg><svg><use href="#gear2"/></svg></div>
        <div class="rw"><svg><use href="#point"/></svg></div>
      </div>
      <div class="gfoot"><span class="gl tl">齿轮...</span><i class="dn"></i></div>
    </div>
    <div class="grp w58">
      <div class="gcol p5">
        <div class="rw"><svg><use href="#coil"/></svg><svg><use href="#spring"/></svg></div>
        <div class="rw"><svg><use href="#ring"/></svg><b></b><svg><use href="#springx"/></svg></div>
      </div>
      <div class="gfoot"><span class="gl tl">弹簧...</span><i class="dn"></i></div>
    </div>
    <div class="grp w52">
      <div class="gcol p5">
        <div class="rw"><svg><use href="#vcheck"/></svg><svg><use href="#clist"/></svg></div>
        <div class="rw"><svg><use href="#gridb"/></svg><svg><use href="#csys"/></svg></div>
      </div>
      <div class="gfoot"><span class="gl tl">加工...</span><i class="dn"></i></div>
    </div>
    <div class="grp w98">
      <div class="gcol p5">
        <div class="rw"><svg><use href="#tri"/></svg><svg><use href="#tbl"/></svg><svg><use href="#foldp"/></svg><svg><use href="#foldc"/></svg></div>
        <div class="rw"><svg><use href="#doc"/></svg><svg><use href="#brushd"/></svg><b></b><span class="tcell bino"><svg><use href="#bino"/></svg><em>10H7</em></span></div>
      </div>
      <div class="gfoot"><span class="gl tl">建模工具 - G...</span><i class="dn"></i></div>
    </div>
    <div class="grp w30">
      <div class="gcol p4">
        <div class="rw"><svg><use href="#boxes"/></svg></div>
        <div class="rw"><svg><use href="#boxes"/></svg></div>
      </div>
      <div class="gfoot"><span class="gl cut">?..</span><i class="dn"></i></div>
    </div>
    <div class="grp w233 last">
      <div class="gcol p5">
        <div class="rw"><svg><use href="#dim"/></svg><b class="n"></b><svg><use href="#x"/></svg>
          <span class="tcell tol"><em>1.00</em><em class="r">±.05</em></span>
          <span class="tcell tol"><em>1.00</em><em class="r two">+.02<br>-.02</em></span>
          <span class="tcell tol"><em>1.00</em><em class="r two">+.00<br>-.08</em></span>
          <span class="tcell tol"><em>1.00</em><em class="r two g">+.00<br>-.02</em></span>
          <svg><use href="#xbox"/></svg><svg><use href="#xpar"/></svg>
          <span class="tcell h7">10H7</span>
          <span class="tcell h7 b2">10H7<br>||0.0</span>
        </div>
        <div class="rw"><svg><use href="#rad"/></svg><svg><use href="#rad2"/></svg><b class="n"></b><svg><use href="#dia"/></svg><svg><use href="#dia2"/></svg><svg><use href="#ret"/></svg></div>
      </div>
      <div class="gfoot"><span class="gl ctr">尺寸快速格式化工具 - GC工具箱</span></div>
    </div>
  </section>

  <section class="toolbar">
    <svg class="t18"><use href="#menu"/></svg><span class="mt">菜单(<u>M</u>)</span><span class="caret"></span><span class="vs v85"></span>
    <span class="sel s1">无选择过滤器</span>
    <span class="sel s2">整个装配</span>
    <svg class="t"><use href="#gh1"/></svg><svg class="t"><use href="#gh2"/></svg>
    <svg class="t n22"><use href="#filt"/></svg><span class="caret"></span>
    <svg class="t ml6"><use href="#gh3"/></svg><svg class="t n20"><use href="#gh4"/></svg>
    <svg class="t ml3"><use href="#selc"/></svg><svg class="t ml1"><use href="#selb"/></svg><span class="caret"></span>
    <svg class="t ml4"><use href="#persp"/></svg><svg class="t"><use href="#cube"/></svg>
    <svg class="t h ml3"><use href="#snap"/></svg><svg class="t h ml1"><use href="#ln1"/></svg><svg class="t h ml3"><use href="#ln2"/></svg>
    <svg class="t ml1"><use href="#curve"/></svg>
    <svg class="t h ml2"><use href="#poly"/></svg><svg class="t h ml1"><use href="#spl"/></svg>
    <svg class="t ml2"><use href="#arcp"/></svg><svg class="t h ml1"><use href="#cen"/></svg>
    <svg class="t ml2"><use href="#cirq"/></svg><svg class="t h ml1"><use href="#cross"/></svg><svg class="t h ml3"><use href="#ln2"/></svg>
    <svg class="t"><use href="#surf"/></svg><svg class="t ml2"><use href="#face"/></svg><svg class="t"><use href="#mesh"/></svg>
    <span class="vs v2"></span>
    <svg class="t"><use href="#fit"/></svg><svg class="t ml1"><use href="#hand"/></svg><svg class="t ml1"><use href="#rot"/></svg><svg class="t ml1"><use href="#pen"/></svg><svg class="t"><use href="#gh5"/></svg>
    <svg class="t ml3"><use href="#win2"/></svg><span class="caret"></span>
    <svg class="t ml1"><use href="#shade"/></svg><span class="caret"></span>
    <svg class="t ml3"><use href="#cube2"/></svg><span class="caret"></span>
    <svg class="t ml1"><use href="#rend"/></svg><span class="caret"></span>
    <span class="vs v3"></span>
  </section>

  <main class="work">
    <aside class="rail">
      <div class="ri top"><svg><use href="#cog"/></svg></div>
      <div class="ri"><svg><use href="#asm"/></svg></div>
      <div class="ri sh"><svg><use href="#cons"/></svg></div>
      <div class="ri on"><svg><use href="#parts"/></svg></div>
      <div class="ri"><svg><use href="#books"/></svg></div>
      <div class="ri g2"><svg class="lg"><use href="#info"/></svg></div>
      <div class="ri g3"><svg><use href="#page"/></svg></div>
      <div class="ri g4"><svg><use href="#clock"/></svg></div>
      <div class="ri g5"><svg><use href="#rain"/></svg></div>
      <div class="ri"><svg><use href="#wand"/></svg></div>
      <div class="ri"><svg><use href="#tools"/></svg></div>
    </aside>

    <section class="panel">
      <div class="ptitle"><span>部件导航器</span><span class="maxb"></span></div>
      <div class="table">
        <div class="thead"><span class="c1">名称<i class="sort"></i></span><span class="c2">最新</span><span class="c3">附</span></div>
        <div class="tree">
          <svg class="lines">
            <path d="M9.500 10V70M14 10H18M14 30H20M10 50H18M14 70H18M28.500 80V210M28 90H40M28 110H40M28 130H40M28 150H40M28 170H40M28 190H40M28 210H40" fill="none" stroke="#999" stroke-dasharray="1 1"/>
          </svg>
          <div class="rowt l0"><span class="exp">+</span><svg class="ni"><use href="#nmodel"/></svg><span class="nm">模型视图</span></div>
          <div class="rowt l0"><span class="exp">+</span><svg class="nok"><use href="#ok"/></svg><svg class="ni"><use href="#ncam"/></svg><span class="nm">摄像机</span></div>
          <div class="rowt l0"><span class="exp none"></span><svg class="ni"><use href="#foldn"/></svg><span class="nm">用户表达式</span></div>
          <div class="rowt l0"><span class="exp">−</span><svg class="ni"><use href="#fold"/></svg><span class="nm">模型历史记录</span></div>
          <div class="rowt l1"><span class="chk"><svg><use href="#ok"/></svg></span><svg class="ni"><use href="#csys"/></svg><span class="nm">基准坐标系 (0)</span><svg class="st"><use href="#ok"/></svg></div>
          <div class="rowt l1"><span class="chk"><svg><use href="#ok"/></svg></span><svg class="ni"><use href="#nsk"/></svg><span class="nm">草图 (1) "SKETCH_0...</span><svg class="st"><use href="#ok"/></svg></div>
          <div class="rowt l1"><span class="chk"><svg><use href="#ok"/></svg></span><svg class="ni"><use href="#next"/></svg><span class="nm">拉伸 (2)</span><svg class="st"><use href="#ok"/></svg></div>
          <div class="rowt l1"><span class="chk"><svg><use href="#ok"/></svg></span><svg class="ni"><use href="#next"/></svg><span class="nm">拉伸 (3)</span><svg class="st"><use href="#ok"/></svg></div>
          <div class="rowt l1"><span class="chk"><svg><use href="#ok"/></svg></span><svg class="ni"><use href="#next"/></svg><span class="nm">拉伸 (4)</span><svg class="st"><use href="#ok"/></svg></div>
          <div class="rowt l1"><span class="chk"><svg><use href="#ok"/></svg></span><svg class="ni"><use href="#nhole"/></svg><span class="nm">简单孔 (5)</span><svg class="st"><use href="#ok"/></svg></div>
          <div class="rowt l1"><span class="chk"><svg><use href="#ok"/></svg></span><svg class="ni"><use href="#ncham"/></svg><span class="nm bold">倒斜角 (6)</span><svg class="st"><use href="#ok"/></svg></div>
        </div>
        <div class="hscroll"><i class="al"></i><span class="thumb"><b>III</b></span><i class="ar"></i></div>
      </div>
      <div class="split"></div>
      <div class="acc"><span>相关性</span><svg viewBox="0 0 12 8"><path d="M1 1L6 6.500L11 1" fill="none" stroke="#0a5f7f" stroke-width="2"/></svg></div>
      <div class="acc"><span>细节</span><svg viewBox="0 0 12 8"><path d="M1 1L6 6.500L11 1" fill="none" stroke="#0a5f7f" stroke-width="2"/></svg></div>
      <div class="acc"><span>预览</span><svg viewBox="0 0 12 8"><path d="M1 1L6 6.500L11 1" fill="none" stroke="#0a5f7f" stroke-width="2"/></svg></div>
    </section>

    <section class="view">
      <div class="vtabs">
        <span class="vt"><svg><use href="#cube3"/></svg>50.prt</span>
        <span class="vt cur"><svg><use href="#cube3"/></svg>_model1.prt<svg class="pop" viewBox="0 0 12 12"><path d="M1.500 1.500H7.500L10.500 4.500V10.500H1.500ZM6 6L10 2M10 2V5" fill="none" stroke="#fff" stroke-width="1.500"/></svg><b>✕</b></span>
      </div>
      <div class="canvas">
        <svg class="model" viewBox="363 202 981 742" xmlns="http://www.w3.org/2000/svg">
          <defs>
            <linearGradient id="side" gradientUnits="userSpaceOnUse" x1="612" x2="1252" y1="0" y2="0">
              <stop offset="0" stop-color="#ad6b00"/><stop offset=".08" stop-color="#935c00"/><stop offset=".17" stop-color="#6f4500"/><stop offset=".54" stop-color="#6f4500"/><stop offset=".67" stop-color="#a06400"/><stop offset=".94" stop-color="#a86800"/><stop offset="1" stop-color="#d48300"/>
            </linearGradient>
            <linearGradient id="cone" x1="0" x2="1" y1="0" y2="0"><stop offset="0" stop-color="#ffaf0a"/><stop offset=".25" stop-color="#ffbd20"/><stop offset=".55" stop-color="#ffa208"/><stop offset="1" stop-color="#ef9000"/></linearGradient>
            <linearGradient id="cyl" x1="0" x2="1" y1="0" y2="0"><stop offset="0" stop-color="#c47c00"/><stop offset=".5" stop-color="#6f4500"/><stop offset="1" stop-color="#b87400"/></linearGradient>
            <linearGradient id="wall" gradientUnits="userSpaceOnUse" x1="325" x2="890" y1="0" y2="0"><stop offset="0" stop-color="#d08000"/><stop offset=".2" stop-color="#b06c00"/><stop offset=".48" stop-color="#6c4300"/><stop offset=".75" stop-color="#a86800"/><stop offset=".76" stop-color="#8f5a00"/><stop offset="1" stop-color="#8f5a00"/></linearGradient>
            <clipPath id="stad"><path d="M95 400C95 370 110 340 130 320L335 150C385 105 440 85 500 75L815 45C900 35 1000 80 1035 150C1055 200 1045 250 1000 300L830 430C760 485 660 530 500 545L260 558C170 540 95 480 95 400Z"/></clipPath>
          </defs>
          <path d="M612 623L613 670C618 695 640 722 680 735C695 741 720 742 740 739L960 708C1000 702 1030 685 1060 665L1217 552C1232 540 1250 515 1252 490L1252 465L1250 453Z" fill="url(#side)"/>
          <path d="M613 670C618 695 640 722 680 735C695 741 720 742 740 739L960 708C1000 702 1030 685 1060 665L1217 552C1232 540 1250 515 1252 490" fill="none" stroke="#4a6cff" stroke-width="1.600"/>
          <path d="M736 699L737 739M959 672L961 708M1055 632L1057 665M1217 512L1219 552" stroke="#3a3020" stroke-width=".8" fill="none"/>
          <path d="M612 623C612 600 635 575 655 560L820 441C848 421 870 416 900 411.500L1125 381.500C1190 378 1250 410 1250 453C1250 475 1235 492 1217 512L1055 632C1030 652 1000 667 960 672L735 699C700 703 660 695 633 665C620 650 612 640 612 623Z" fill="#ffca00" stroke="#2c2c14" stroke-width=".9"/>
          <g>
            <ellipse cx="718" cy="622" rx="59" ry="43" fill="url(#cone)" stroke="#5a4a10" stroke-width=".8"/>
            <ellipse cx="719" cy="644" rx="30" ry="23" fill="url(#cyl)" stroke="#443a10" stroke-width=".7"/>
            <path d="M694 654C700 646 709 642 720 642C732 642 742 646 747 652C740 660 730 664 719 664C709 664 700 660 694 654Z" fill="#dfe1e3"/>
            <ellipse cx="1143" cy="457" rx="59" ry="43" fill="url(#cone)" stroke="#5a4a10" stroke-width=".8"/>
            <ellipse cx="1144" cy="480" rx="30" ry="23" fill="url(#cyl)" stroke="#443a10" stroke-width=".7"/>
            <path d="M1118 489C1124 481 1133 477 1145 477C1157 477 1166 481 1171 487C1164 495 1155 499 1144 499C1133 499 1124 495 1118 489Z" fill="#dcdedf"/>
          </g>
          <g transform="translate(740 440) scale(.33333)">
            <path d="M95 400C95 370 110 340 130 320L335 150C385 105 440 85 500 75L815 45C900 35 1000 80 1035 150C1055 200 1045 250 1000 300L830 430C760 485 660 530 500 545L260 558C170 540 95 480 95 400Z" fill="#7a4c00"/>
            <g clip-path="url(#stad)"><path transform="translate(4 12)" d="M95 400C95 370 110 340 130 320L335 150C385 105 440 85 500 75L815 45C900 35 1000 80 1035 150C1055 200 1045 250 1000 300L830 430C760 485 660 530 500 545L260 558C170 540 95 480 95 400Z" fill="#ffca00" stroke="#5a4a10" stroke-width="2"/></g>
            <path d="M95 400C95 370 110 340 130 320L335 150C385 105 440 85 500 75L815 45C900 35 1000 80 1035 150C1055 200 1045 250 1000 300L830 430C760 485 660 530 500 545L260 558C170 540 95 480 95 400Z" fill="none" stroke="#2c2c14" stroke-width="2.400"/>
            <path d="M190 405L325 352C325 250 440 138 600 138C660 138 710 160 752 185L890 135L968 245L820 305C825 380 720 498 580 498C520 498 460 490 420 462L265 518Z" fill="url(#wall)" stroke="#2c2c14" stroke-width="2.400"/>
            <path d="M250 488L330 455L330 400C345 345 470 240 600 240C660 240 710 260 755 290L890 240L915 268L820 305C825 380 720 498 580 498C520 498 460 490 420 462L265 518Z" fill="#d5d7d9"/>
            <path d="M250 488L330 455L330 400C345 345 470 240 600 240C660 240 710 260 755 290L890 240L915 268" fill="none" stroke="#4a6cff" stroke-width="5"/>
            <path d="M820 305C825 380 720 498 580 498C520 498 460 490 420 462" fill="none" stroke="#333" stroke-width="2"/>
            <path d="M752 185L755 290M890 135L890 240" stroke="#33240a" stroke-width="2.400"/>
            <path d="M190 405L250 488" stroke="#33240a" stroke-width="2"/>
            <g fill="none" stroke-width="2.600">
              <path d="M578 425L470 270M578 425L395 490M565 160L578 425M480 155L487 290M480 155L570 285M570 285L390 350L395 490M487 290L360 342" stroke="#2a35e8"/>
              <path d="M470 270L410 185M395 490L225 555M360 342L310 365L395 490" stroke="#dcdcdc"/>
            </g>
            <path d="M552 425H600M578 403V442" stroke="#1a28e8" stroke-width="6" fill="none"/>
            <path d="M565 150L574 186H556Z" fill="#0b1aa8"/>
            <path d="M410 185L428 197L416 207Z" fill="#f0f0f0" stroke="#aaa"/>
            <path d="M225 555L262 538L266 552Z" fill="#f0f0f0" stroke="#aaa"/>
            <text x="550" y="146" class="ax ab">Z</text>
            <text x="378" y="168" class="ax aw">X</text>
            <text x="188" y="580" class="ax aw">Y</text>
          </g>
          <g transform="translate(375 850) scale(.33333)">
            <path d="M48 62L110 38L145 80L150 135L90 165L48 118Z" fill="#d5d6d8" fill-opacity=".6" stroke="#bbb" stroke-width="3"/>
            <path d="M48 62L85 105L145 80M85 105L90 165" fill="none" stroke="#bbb" stroke-width="3"/>
            <path d="M150 135L88 45" stroke="#e5b0b0" stroke-width="7"/>
            <path d="M150 135L146 60" stroke="#0c2aa8" stroke-width="7"/>
            <path d="M146 50L157 78H136Z" fill="#0c2aa8"/>
            <path d="M150 135L60 168" stroke="#37a837" stroke-width="7"/>
            <path d="M38 176L70 152L76 172Z" fill="#37a837"/>
            <circle cx="150" cy="135" r="10" fill="#f4f4f4" stroke="#bbb" stroke-width="2"/>
            <text x="132" y="50" class="ax2 zb">Z</text>
            <text x="76" y="50" class="ax2 xr">X</text>
            <text x="12" y="196" class="ax2 yg">Y</text>
          </g>
        </svg>
        <span class="mark">UG<span class="cj">爱好者论坛</span>@yuzh112400</span>
      </div>
    </section>
  </main>
</div>
</body>
</html>
```
FILE: styles.css
```css
* { box-sizing: border-box; }
html, body { margin: 0; padding: 0; background: #fff; }
body { font: 11px/16px "Noto Sans", "Noto Sans CJK SC", sans-serif; color: #222; overflow: hidden; }
.sprite { position: absolute; width: 0; height: 0; }
.app { width: 1344px; height: 944px; display: flex; flex-direction: column; overflow: hidden; }
svg { display: block; flex: none; }
i, em { font-style: normal; display: block; }

/* title bar */
.titlebar { height: 25px; display: flex; align-items: center; flex: none; padding: 0 0 7px 3px; }
.logo { width: 33px; font: bold 22px/18px "Liberation Sans", sans-serif; letter-spacing: 1.500px; color: #8ea0b4; position: relative; top: 1px; white-space: nowrap; }
.vsep { width: 1px; height: 22px; background: #d8d8d8; margin: 0 1px 0 3px; flex: none; }
.qi { width: 18px; height: 18px; margin: 0 2.500px; }
.qa { margin-left: 8px; }
.caret { width: 6px; height: 0; border: 3px solid transparent; border-top: 4px solid #222; border-bottom: 0; flex: none; }
.titlebar .caret { margin: 0 3px 0 5px; }
.titlebar .caret.bar { margin: 0; position: relative; }
.caret.bar::before { content: ""; position: absolute; left: -3px; top: -7px; width: 6px; height: 1px; background: #222; }
.qt { font-size: 11px; margin: 0 3.500px 0 1px; white-space: nowrap; }
.title { margin-left: auto; margin-right: 225px; font-size: 12px; color: #111; letter-spacing: .4px; }

/* tabs */
.tabs { height: 28px; background: #dbdbdb; display: flex; flex: none; }
.file { width: 80px; background: #549fba; color: #fff; font-size: 13px; line-height: 26px; text-align: center; padding-right: 3px; }
.tab { padding: 0 13px; font-size: 13px; line-height: 26px; color: #222; }
.tab.active { background: #fff; color: #0a6e96; margin-left: 2px; border-top: 1px solid #ccc; line-height: 25px; }

/* ribbon */
.ribbon { height: 93px; display: flex; flex: none; border-bottom: 1px solid #ddd; overflow: hidden; }
.grp { display: flex; flex-direction: column; position: relative; flex: none; }
.grp::after { content: ""; position: absolute; right: 0; top: 5px; bottom: 4px; width: 1px; background: #dcdcdc; }
.grp.last::after { display: none; }
.w177 { width: 177px; } .w369 { width: 369px; } .w171 { width: 171px; } .w104 { width: 104px; } .w52 { width: 52px; } .w58 { width: 58px; } .w98 { width: 98px; } .w30 { width: 30px; } .w233 { width: 233px; }
.gbody { height: 74px; display: flex; align-items: flex-start; }
.gcol { height: 74px; padding-top: 6px; }
.p0 { padding-left: 0; } .p4 { padding-left: 4px; } .p5 { padding-left: 5px; } .p11 { padding-left: 11px; }
.gfoot { height: 18px; display: flex; align-items: center; justify-content: center; position: relative; color: #0a6e96; padding: 2px 18px 0 0; }
.gl { line-height: 14px; white-space: nowrap; }
.gl.tl { position: absolute; left: 2px; top: 4px; }
.gl.cut { position: absolute; left: 0; top: 4px; }
.gl.ctr { position: absolute; left: 56px; top: 4px; }
.gfoot .dn { position: absolute; right: 8px; top: 8px; }
.dn, .up, .dnb { width: 0; height: 0; border: 3px solid transparent; }
.dn { border-top: 4px solid #222; border-bottom: 0; }
.up { border-bottom: 4px solid #aaa; border-top: 0; }
.dnb { border-top: 4px solid #222; border-bottom: 0; position: relative; margin-top: 3px; }
.dnb::before { content: ""; position: absolute; left: -3px; top: -7px; width: 6px; height: 1px; background: #222; }

.big { display: flex; flex-direction: column; align-items: center; flex: none; }
.big .bi { width: 32px; height: 32px; margin-top: 4px; }
.big span { margin-top: 6px; line-height: 15px; white-space: nowrap; }
.big .dn { margin-top: 6px; }
.w56 { width: 56px; } .w46 { width: 46px; } .w34 { width: 34px; } .w68 { width: 68px; } .w62 { width: 62px; } .w70 { width: 70px; }
.ml1 { margin-left: 1px; } .ml2 { margin-left: 2px; } .ml3 { margin-left: 3px; } .ml4 { margin-left: 4px; } .ml5 { margin-left: 5px; } .ml6 { margin-left: 6px; } .ml9 { margin-left: 9px; }

.gallery { margin-top: 5px; width: 99px; height: 66px; border: 1px solid #ddd; display: grid; grid-template-columns: repeat(3, 1fr); grid-template-rows: repeat(2, 1fr); }
.gallery svg { width: 100%; height: 100%; }
.gscroll { width: 22px; height: 66px; margin-top: 5px; display: flex; flex-direction: column; align-items: center; justify-content: space-around; padding: 8px 0 6px; }
.scol { display: flex; flex-direction: column; flex: none; padding-top: 1px; }
.sr { height: 22px; display: flex; align-items: center; white-space: nowrap; }
.sr svg { width: 17px; height: 17px; margin-right: 4px; }
.more { width: 38px; display: flex; flex-direction: column; align-items: center; flex: none; margin-top: 4px; }
.mbox { width: 38px; height: 35px; border: 1px solid #ddd; border-radius: 4px; display: flex; align-items: center; justify-content: center; }
.mbox svg { width: 20px; height: 20px; }
.more span { margin-top: 2px; line-height: 15px; }
.more .dn { margin-top: 6px; }
.rw { height: 30px; display: flex; align-items: center; }
.rw > svg { width: 19px; height: 19px; margin: 0 2px; }
.rw > b { width: 6px; height: 19px; position: relative; flex: none; }
.rw > b::after { content: ""; position: absolute; left: 2px; top: 0; bottom: 0; width: 1px; background: #ddd; }
.rw > b.n { width: 4px; }
.rw > b.n::after { left: 1px; }
.tcell { width: 23px; flex: none; display: block; text-align: center; }
.tol em { font: bold 7px/7px "Liberation Sans", sans-serif; color: #333; }
.tol em.r { color: #a33; }
.tol em.r.two { line-height: 6px; font-size: 7px; }
.tol em.g { color: #888; }
.h7 { font: bold 8px/9px "Liberation Sans", sans-serif; color: #4c5cc0; }
.h7.b2 { font-weight: normal; }
.bino svg { width: 16px; height: 11px; margin: 0 auto; }
.bino em { font: bold 7px/8px "Liberation Sans", sans-serif; color: #333; }

/* toolbar */
.toolbar { height: 33px; flex: none; display: flex; align-items: center; padding: 2px 0 0 8px; border-bottom: 1px solid #a6a6a6; }
.t18 { width: 18px; height: 18px; margin-right: 2px; }
.mt { margin-right: 4px; white-space: nowrap; }
.toolbar .caret { margin: 0 2px; }
.vs { width: 1px; height: 23px; background: #d8d8d8; flex: none; }
.v85 { margin: 0 10px 0 6px; }
.v2 { margin: 0 7px 0 6px; }
.v3 { margin-left: 8px; }
.sel { height: 20px; border: 1px solid #999; display: flex; align-items: center; padding-left: 2px; position: relative; flex: none; line-height: 18px; }
.sel::after { content: ""; position: absolute; right: 7px; top: 7px; border: 4px solid transparent; border-top: 5px solid #222; border-bottom: 0; }
.s1 { width: 133px; }
.s2 { width: 139px; margin: 0 5px 0 9px; }
.t { width: 24px; height: 24px; padding: 3px; }
.t.n22 { width: 22px; } .t.n20 { width: 20px; }
.t.h { width: 23px; height: 23px; background: #cde4ea; border: 1px solid #a9cfd9; padding: 2px; }

/* work area */
.work { flex: 1; display: flex; min-height: 0; }
.rail { width: 31px; flex: none; background: #dcdcdc; border-right: 1px solid #9a9a9a; display: flex; flex-direction: column; align-items: center; }
.ri { width: 30px; height: 42px; flex: none; display: flex; align-items: center; justify-content: center; }
.ri svg { width: 24px; height: 24px; }
.ri.top { height: 26px; margin-bottom: 17px; }
.ri.top svg { width: 17px; height: 17px; }
.ri.sh { height: 40px; }
.ri.on { background: #fff; border: 1px solid #aaa; border-right: 0; height: 44px; width: 31px; margin-left: 1px; z-index: 1; position: relative; }
.ri.g2 { margin-top: 12px; height: 44px; }
.ri .lg { width: 26px; height: 26px; }
.ri.g3 { margin-top: 10px; }
.ri.g4 { margin-top: 11px; }
.ri.g5 { margin-top: 1px; }

.panel { width: 332px; flex: none; border-right: 1px solid #a0a0a0; padding-left: 7px; display: flex; flex-direction: column; padding-right: 9px; }
.ptitle { height: 30px; display: flex; align-items: center; justify-content: space-between; font-size: 12px; padding: 0 7px 0 3px; flex: none; }
.maxb { width: 12px; height: 11px; border: 1px solid #222; border-top-width: 2px; }
.table { width: 315px; border: 1px solid #ddd; display: flex; flex-direction: column; flex: none; }
.thead { height: 20px; display: flex; background: #f6f6f6; border-bottom: 1px solid #d0d0d0; font-size: 12px; line-height: 20px; overflow: hidden; }
.thead span { border-right: 1px solid #ddd; padding-left: 5px; position: relative; }
.c1 { width: 200px; } .c2 { width: 100px; } .c3 { width: 13px; }
.sort { position: absolute; left: 48px; top: 7px; border: 5px solid transparent; border-bottom: 5px solid #222; border-top: 0; }
.tree { height: 627px; position: relative; overflow: hidden; background:
  linear-gradient(#eee, #eee) 199px 0 / 1px 100% no-repeat,
  linear-gradient(#eee, #eee) 299px 0 / 1px 100% no-repeat,
  repeating-linear-gradient(#fff 0, #fff 19px, #eee 19px, #eee 20px, #f9f9f9 20px, #f9f9f9 39px, #eee 39px, #eee 40px); }
.lines { position: absolute; left: 0; top: 0; width: 60px; height: 230px; pointer-events: none; }
.rowt { height: 20px; display: flex; align-items: center; font-size: 12px; line-height: 20px; white-space: nowrap; position: relative; }
.l0 { padding-left: 5px; }
.l1 { padding-left: 40px; }
.exp { width: 9px; height: 9px; background: #fff; border: 1px solid #bbb; font: 9px/7px "Liberation Sans", sans-serif; text-align: center; margin-right: 4px; flex: none; }
.exp.none { background: none; border: 0; }
.ni { width: 16px; height: 16px; margin-right: 4px; }
.nok { width: 13px; height: 13px; margin: 0 2px 0 2px; }
.nm { color: #222; word-spacing: 1px; }
.bold { font-weight: bold; }
.l1 .ni { margin-left: 1px; margin-right: 4px; }
.chk { width: 12px; height: 12px; border: 1px solid #111; background: #fff; flex: none; }
.chk svg { width: 10px; height: 10px; }
.st { position: absolute; left: 206px; top: 3px; width: 13px; height: 13px; }
.hscroll { height: 17px; background: #f0f0f0; display: flex; align-items: center; position: relative; padding-left: 18px; }
.thumb { width: 213px; height: 15px; border: 1px solid #8a8a8a; border-radius: 2px; background: linear-gradient(#f2f2f2, #cfcfcf 60%, #bdbdbd); display: flex; align-items: center; justify-content: center; }
.thumb b { font: 8px/10px "Liberation Sans", sans-serif; color: #333; }
.al, .ar { position: absolute; top: 5px; border: 4px solid transparent; }
.al { left: 4px; border-right: 4px solid #333; border-left: 0; }
.ar { right: 8px; border-left: 4px solid #333; border-right: 0; }
.split { height: 5px; width: 316px; background: #cfcfcf; border: 1px solid #999; flex: none; margin-top: 1px; }
.acc { height: 24px; width: 316px; flex: none; display: flex; align-items: center; justify-content: space-between; font-size: 14px; line-height: 20px; color: #0a6e96; border-bottom: 2px solid #cfcfcf; padding: 3px 6px 0 6px; }
.acc svg { width: 12px; height: 9px; }

.view { flex: 1; min-width: 0; display: flex; flex-direction: column; }
.vtabs { height: 23px; flex: none; display: flex; border-bottom: 2px solid #549fba; background: #fff; }
.vt { width: 82px; display: flex; align-items: center; padding-left: 6px; font-size: 12px; line-height: 21px; color: #111; }
.vt svg { width: 16px; height: 16px; margin-right: 4px; }
.vt.cur { width: 133px; background: #549fba; color: #fff; }
.vt.cur .pop { width: 11px; height: 11px; margin: 0 0 0 6px; }
.vt.cur b { margin-left: 5px; font: bold 11px/12px "DejaVu Sans", sans-serif; color: #fff; }
.canvas { flex: 1; position: relative; overflow: hidden; background: linear-gradient(#b3b4b5, #e7e8ea); }
.model { width: 981px; height: 742px; }
.ax { font: 42px "Liberation Sans", sans-serif; }
.ab { fill: #2a35e8; }
.aw { fill: #e4e4e4; }
.ax2 { font: 42px "Liberation Sans", sans-serif; }
.zb { fill: #2a6fe8; } .xr { fill: #d86060; } .yg { fill: #4aa84a; }
.mark { position: absolute; right: 2px; bottom: 3px; font: 13.330px/16px "Liberation Mono", "Noto Sans CJK SC", monospace; color: #8a8c90; text-shadow: 1px 1px 0 #fafafa; white-space: nowrap; }
.cj { font-family: "Noto Sans CJK SC", sans-serif; font-weight: 300; letter-spacing: 2.670px; }
```
